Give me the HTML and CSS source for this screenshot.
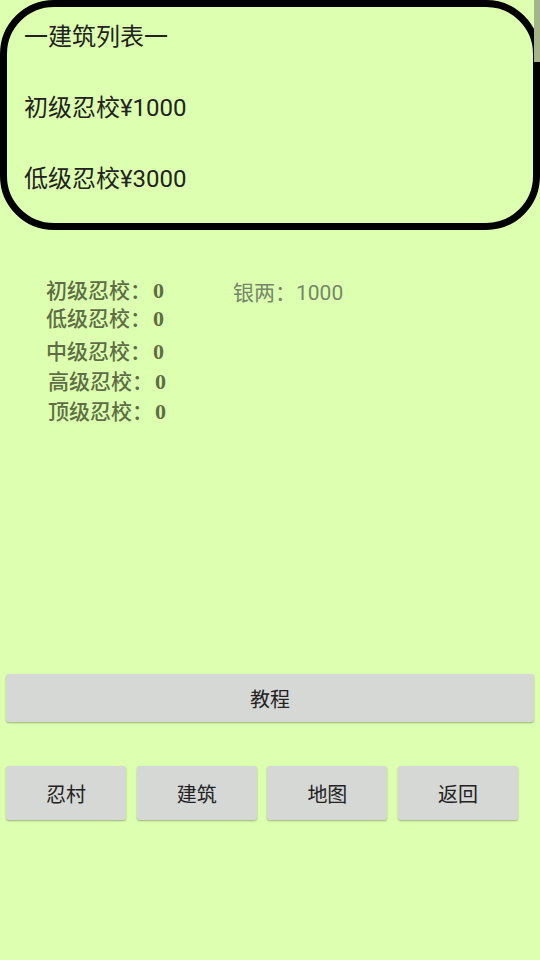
FILE: index.html
```html
<!DOCTYPE html>
<html lang="zh">
<head>
<meta charset="utf-8">
<link rel="stylesheet" href="styles.css">
</head>
<body>
<div class="screen">
  <div class="panel">
    <div class="item">一建筑列表一</div>
    <div class="item">初级忍校¥1000</div>
    <div class="item">低级忍校¥3000</div>
  </div>
  <div class="scrollbar"></div>

  <div class="stats">
    <div class="counts">
      <div class="row">初级忍校：<span class="num">0</span></div>
      <div class="row">低级忍校：<span class="num">0</span></div>
      <div class="row gap5">中级忍校：<span class="num">0</span></div>
      <div class="row gap2 shift">高级忍校：<span class="num">0</span></div>
      <div class="row gap2 shift">顶级忍校：<span class="num">0</span></div>
    </div>
    <div class="money">银两：1000</div>
  </div>

  <button class="btn wide">教程</button>

  <div class="nav">
    <button class="btn small">忍村</button>
    <button class="btn small">建筑</button>
    <button class="btn small">地图</button>
    <button class="btn small">返回</button>
  </div>
</div>
</body>
</html>
```
FILE: styles.css
```css
html, body {
  margin: 0;
  padding: 0;
  background: #ddffb0;
}
.screen {
  position: relative;
  width: 540px;
  height: 960px;
  font-family: Roboto, "Noto Sans CJK SC", sans-serif;
  color: #222;
}
.panel {
  box-sizing: border-box;
  width: 540px;
  height: 230px;
  border: 7px solid #000;
  border-radius: 54px;
  padding: 14px 0 0 17px;
  display: flex;
  flex-direction: column;
  gap: 39px;
}
.item {
  font-size: 24px;
  line-height: 32px;
  color: #222;
}
.scrollbar {
  position: absolute;
  top: 0;
  right: 0;
  width: 6px;
  height: 62px;
  background: #a5b58a;
}
.stats {
  display: flex;
  margin-top: 45px;
}
.counts {
  width: 187px;
  padding-left: 46px;
  font-family: "Noto Sans CJK SC", sans-serif;
  font-weight: 500;
  font-size: 21px;
  color: #5e6d45;
}
.row {
  height: 28px;
  line-height: 28px;
}
.num {
  font-family: "Liberation Serif", serif;
  font-weight: bold;
  font-size: 22px;
  line-height: 0;
  padding-left: 2px;
}
.gap5 { margin-top: 5px; }
.gap2 { margin-top: 2px; }
.shift { padding-left: 2px; }
.money {
  margin-top: 4px;
  font-size: 21px;
  line-height: 28px;
  color: #76866a;
}
.btn {
  display: block;
  border: none;
  border-radius: 3px;
  background: #d6d8d6;
  box-shadow: 0 1px 2px rgba(0, 0, 0, 0.3);
  font-family: Roboto, "Noto Sans CJK SC", sans-serif;
  font-size: 20px;
  color: #222;
  padding: 0;
}
.wide {
  width: 528px;
  height: 48px;
  margin: 250px 0 0 6px;
}
.nav {
  display: flex;
  gap: 10.7px;
  margin: 44px 0 0 6px;
}
.small {
  width: 120px;
  height: 54px;
}
```
